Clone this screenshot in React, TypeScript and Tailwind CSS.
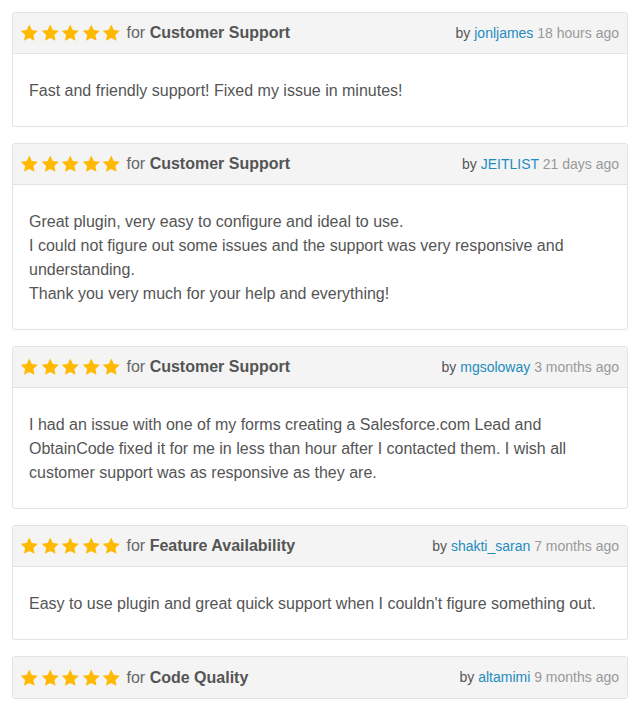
import React from "react";

const reviews = [
  {
    topic: "Customer Support",
    user: "jonljames",
    when: "18 hours ago",
    body: ["Fast and friendly support! Fixed my issue in minutes!"],
  },
  {
    topic: "Customer Support",
    user: "JEITLIST",
    when: "21 days ago",
    body: [
      "Great plugin, very easy to configure and ideal to use.",
      "I could not figure out some issues and the support was very responsive and understanding.",
      "Thank you very much for your help and everything!",
    ],
  },
  {
    topic: "Customer Support",
    user: "mgsoloway",
    when: "3 months ago",
    body: [
      "I had an issue with one of my forms creating a Salesforce.com Lead and ObtainCode fixed it for me in less than hour after I contacted them. I wish all customer support was as responsive as they are.",
    ],
  },
  {
    topic: "Feature Availability",
    user: "shakti_saran",
    when: "7 months ago",
    body: ["Easy to use plugin and great quick support when I couldn't figure something out."],
  },
  {
    topic: "Code Quality",
    user: "altamimi",
    when: "9 months ago",
    body: [],
  },
];

function Star() {
  return (
    <svg viewBox="0 0 20 20" className="w-[20.5px] h-[20px] shrink-0">
      <path
        d="M10 1.6l2.55 5.5 6 .7-4.45 4.1 1.2 5.95L10 14.9l-5.3 2.95 1.2-5.95L1.45 7.8l6-.7z"
        fill="#ffb900"
      />
    </svg>
  );
}

export default function App() {
  return (
    <div className="px-3 pt-3 pb-3 w-[641px] bg-white font-['Liberation_Sans',Arial,sans-serif]">
      {reviews.map((r, i) => (
        <div
          key={i}
          className="mb-4 border border-[#dde3e9] rounded-[3px] overflow-hidden w-[616px]"
        >
          <div
            className={`flex items-center justify-between h-[41px] pl-[6px] pr-[8px] bg-[#f4f4f4] ${
              r.body.length ? "border-b border-[#dde3e9]" : ""
            }`}
          >
            <div className="flex items-center">
              <div className="flex items-center">
                {[0, 1, 2, 3, 4].map((s) => (
                  <Star key={s} />
                ))}
              </div>
              <span className="ml-[5px] text-[16px] text-[#666]">
                for <b className="text-[#555]">{r.topic}</b>
              </span>
            </div>
            <div className="text-[14px] text-[#555]">
              by <span className="text-[#1e8cbe]">{r.user}</span>{" "}
              <span className="text-[#999]">{r.when}</span>
            </div>
          </div>
          {r.body.length > 0 && (
            <div className="px-4 pt-[25px] pb-[23px] text-[16px] leading-6 text-[#555]">
              {r.body.map((line, j) => (
                <p key={j}>{line}</p>
              ))}
            </div>
          )}
        </div>
      ))}
    </div>
  );
}
